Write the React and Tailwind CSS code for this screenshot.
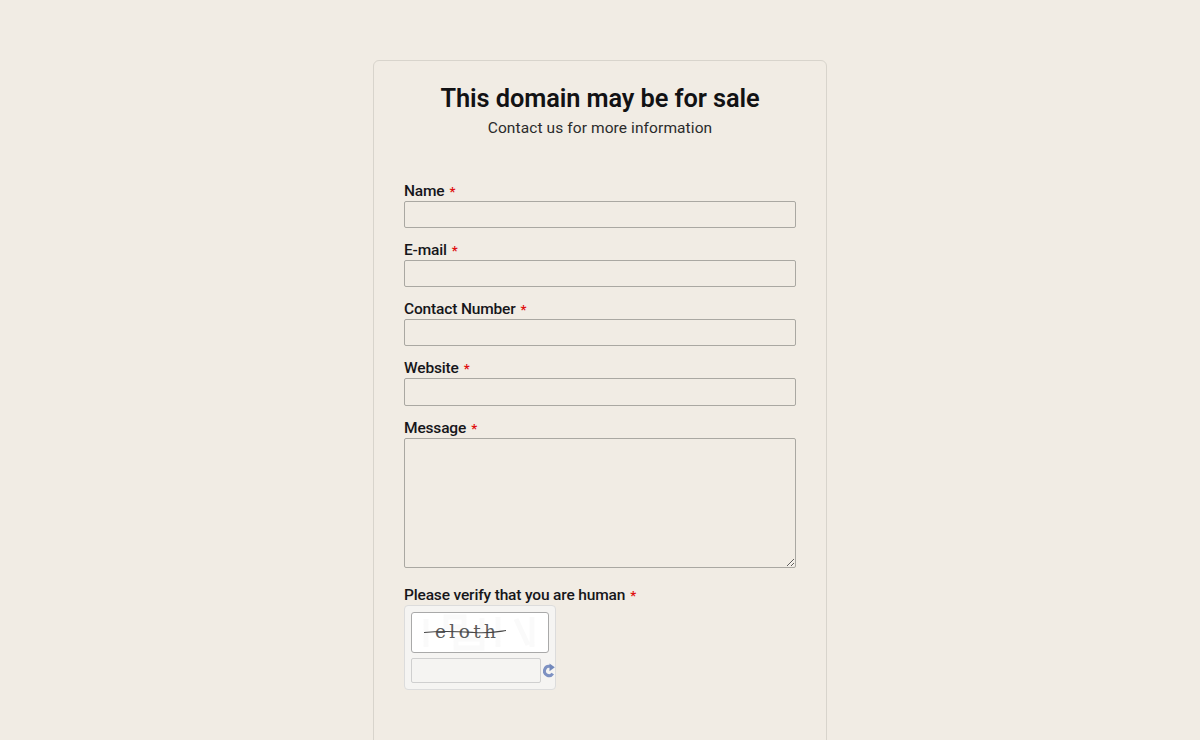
import React from "react";

const fields = ["Name", "E-mail", "Contact Number", "Website"];

const Label = ({ text }) => {
  return (
    <label className="block h-[20px] text-[15.5px] leading-[21px] font-medium text-[#16161a] tracking-[-0.16px]">
      {text}
      <span className="ml-[5px] text-[13px] font-bold text-[#e01010]">*</span>
    </label>
  );
};

const App = () => {
  return (
    <div className="h-screen overflow-hidden bg-[#f1ece4] pt-[60px] font-['Roboto',sans-serif]">
      <div className="w-[454px] min-h-[700px] mx-auto border border-[#d8d4cc] rounded-md px-[30px] pt-[19px]">
        <h1 className="text-center text-[25.4px] leading-[36px] font-semibold text-[#121214] tracking-[-0.1px]">
          This domain may be for sale
        </h1>
        <p className="text-center text-[15.5px] leading-[24px] text-[#2b2b2b] tracking-[0.1px]">
          Contact us for more information
        </p>

        <form className="mt-[40.6px]">
          {fields.map((f) => (
            <div key={f} className="h-[59.25px]">
              <Label text={f} />
              <input
                type="text"
                className="block w-full h-[27.4px] bg-transparent border border-[#aaa8a2] rounded-[2px]"
              />
            </div>
          ))}

          <Label text="Message" />
          <textarea className="block w-full h-[130px] bg-transparent border border-[#aaa8a2] rounded-[2px]" />

          <div className="mt-[17.4px]">
            <Label text="Please verify that you are human" />
          </div>
          <div className="w-[152px] h-[85px] bg-[#f5f4f2] border border-[#dcdcdc] rounded-[4px] pt-[6px] pl-[6px]">
            <div className="relative w-[138px] h-[41px] bg-white border border-[#a9a9a9] rounded-[3px] flex items-center pl-[23px] overflow-hidden">
              {/* pale noise behind the captcha word */}
              <svg className="absolute inset-0" width="136" height="39" viewBox="0 0 136 39" fill="none">
                <path
                  d="M14 6v28M34 4h18v10H34zM44 26h26v9H44zM70 5v14M86 4v30M104 6l12 26M120 4v30"
                  stroke="#fafafa"
                  strokeWidth="5"
                />
              </svg>
              <span className="relative font-['DejaVu_Serif',serif] text-[18.5px] leading-none text-[#5c5c5c] tracking-[3.4px]">
                eloth
              </span>
              <svg className="absolute left-[12px] top-[15px]" width="84" height="8" viewBox="0 0 84 8" fill="none">
                <path d="M0 4.500C20 2.500 34 3.500 50 4.500S72 4 82 2.500" stroke="#444" strokeWidth="1.100" />
              </svg>
            </div>
            <div className="flex items-center mt-[5px]">
              <input
                type="text"
                className="block w-[130px] h-[25px] bg-[#f5f4f2] border border-[#cfcfcf] rounded-[2px]"
              />
              <svg className="ml-[2px] shrink-0" width="13" height="15" viewBox="0 0 13 15" fill="none">
                <path d="M9.800 10.700A4.600 4.600 0 1 1 7 3.500" stroke="#7d91c2" strokeWidth="3" />
                <path d="M6.500.6 11.800 4.200 6.500 8.200Z" fill="#7288bb" />
              </svg>
            </div>
          </div>
        </form>
      </div>
    </div>
  );
};

export default App;
